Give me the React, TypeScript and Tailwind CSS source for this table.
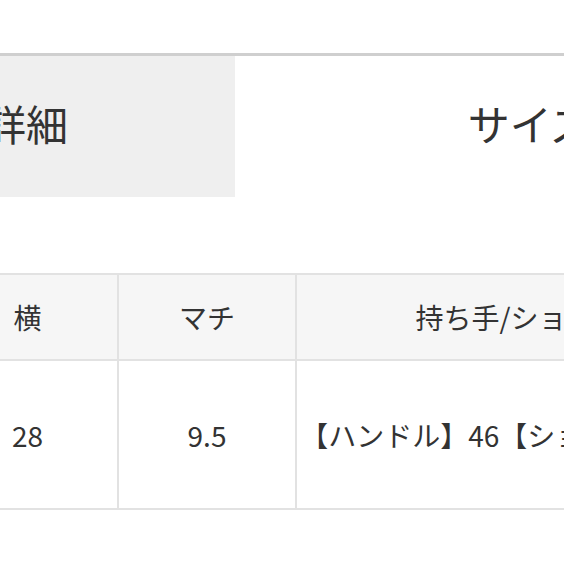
import React from "react";

const font = { fontFamily: '"Noto Sans CJK JP", "Noto Sans", sans-serif' };

export default function App() {
  return (
    <div className="w-[564px] h-[564px] overflow-hidden bg-white text-[#333]" style={font}>
      <div className="h-[53px]" />
      <div className="border-t-[3px] border-[#cfcfcf] w-[1400px] ml-[-267px] flex">
        <div className="w-[502px] h-[141px] pb-[8px] bg-[#efefef] flex items-center justify-center text-[42px] leading-none">
          商品詳細
        </div>
        <div className="w-[590px] h-[141px] pb-[8px] flex items-center justify-center text-[42px] leading-none">
          サイズ
        </div>
      </div>
      <div className="h-[76px]" />
      <div className="ml-[-237px] w-[1100px]">
        <div className="flex border-t-2 border-b-2 border-[#e2e2e2] bg-[#f6f6f6] h-[88px] text-[28px]">
          <div className="w-[178px] flex items-center justify-center border-r-2 border-[#e2e2e2]">縦</div>
          <div className="w-[178px] pr-[3px] flex items-center justify-center border-r-2 border-[#e2e2e2]">横</div>
          <div className="w-[178px] flex items-center justify-center border-r-2 border-[#e2e2e2]">マチ</div>
          <div className="w-[474px] flex items-center justify-center border-r-2 border-[#e2e2e2] whitespace-nowrap">持ち手/ショルダー</div>
        </div>
        <div className="flex border-b-2 border-[#e2e2e2] bg-white h-[149px] text-[28px]">
          <div className="w-[178px] flex items-center justify-center border-r-2 border-[#e2e2e2]">20</div>
          <div className="w-[178px] pr-[3px] flex items-center justify-center border-r-2 border-[#e2e2e2]">28</div>
          <div className="w-[178px] flex items-center justify-center border-r-2 border-[#e2e2e2]">9.5</div>
          <div className="w-[474px] pr-[24px] flex items-center justify-center border-r-2 border-[#e2e2e2] whitespace-nowrap">【ハンドル】46【ショルダー】120</div>
        </div>
      </div>
    </div>
  );
}
